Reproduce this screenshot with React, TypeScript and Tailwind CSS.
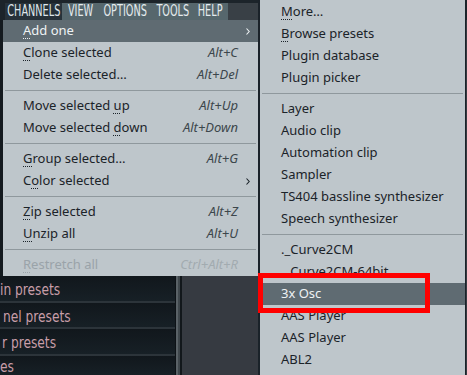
import { ReactNode } from 'react';

type MenuItem =
  | { kind: 'sep' }
  | { kind: 'item'; label: ReactNode; shortcut?: string; arrow?: boolean; active?: boolean; disabled?: boolean };

function U({ children }: { children: ReactNode }) {
  return <span className="underline decoration-dotted decoration-1 underline-offset-[3px]">{children}</span>;
}

const channelMenu: MenuItem[] = [
  { kind: 'item', label: <><U>A</U>dd one</>, arrow: true, active: true },
  { kind: 'item', label: <><U>C</U>lone selected</>, shortcut: 'Alt+C' },
  { kind: 'item', label: 'Delete selected…', shortcut: 'Alt+Del' },
  { kind: 'sep' },
  { kind: 'item', label: <>Move selected <U>u</U>p</>, shortcut: 'Alt+Up' },
  { kind: 'item', label: <>Move selected <U>d</U>own</>, shortcut: 'Alt+Down' },
  { kind: 'sep' },
  { kind: 'item', label: <><U>G</U>roup selected…</>, shortcut: 'Alt+G' },
  { kind: 'item', label: <>C<U>o</U>lor selected</>, arrow: true },
  { kind: 'sep' },
  { kind: 'item', label: <><U>Z</U>ip selected</>, shortcut: 'Alt+Z' },
  { kind: 'item', label: <><U>U</U>nzip all</>, shortcut: 'Alt+U' },
  { kind: 'sep' },
  { kind: 'item', label: <><U>R</U>estretch all</>, shortcut: 'Ctrl+Alt+R', disabled: true },
];

const addMenu: MenuItem[] = [
  { kind: 'item', label: <><U>M</U>ore…</> },
  { kind: 'item', label: <><U>B</U>rowse presets</> },
  { kind: 'item', label: 'Plugin database' },
  { kind: 'item', label: 'Plugin picker' },
  { kind: 'sep' },
  { kind: 'item', label: 'Layer' },
  { kind: 'item', label: 'Audio clip' },
  { kind: 'item', label: 'Automation clip' },
  { kind: 'item', label: 'Sampler' },
  { kind: 'item', label: 'TS404 bassline synthesizer' },
  { kind: 'item', label: 'Speech synthesizer' },
  { kind: 'sep' },
  { kind: 'item', label: '._Curve2CM' },
  { kind: 'item', label: '._Curve2CM-64bit' },
  { kind: 'item', label: '3x Osc', active: true },
  { kind: 'item', label: 'AAS Player' },
  { kind: 'item', label: 'AAS Player' },
  { kind: 'item', label: 'ABL2' },
];

function Chevron() {
  return (
    <svg width="4" height="7" viewBox="0 0 4 7" className="absolute right-[8px] top-[8px]">
      <path d="M0.5 0.5 L3.2 3.5 L0.5 6.5" fill="none" stroke="currentColor" strokeWidth="1.1" />
    </svg>
  );
}

function MenuRows({ items, padL, padR }: { items: MenuItem[]; padL: string; padR: string }) {
  return (
    <>
      {items.map((it, i) => {
        if (it.kind === 'sep') {
          return (
            <div key={i} className="flex h-[9px] items-center px-[2px]">
              <div className="h-px w-full bg-[#8f989d]" />
            </div>
          );
        }
        const color = it.active ? 'bg-[#5f6b72] text-[#eef2f4]' : it.disabled ? 'text-[#9aa3a9]' : 'text-[#1b2329]';
        return (
          <div key={i} className={`relative flex h-[22px] items-center justify-between ${padL} ${padR} ${color}`}>
            <span className="whitespace-nowrap">{it.label}</span>
            {it.shortcut && (
              <span className={`italic whitespace-nowrap ${it.disabled ? 'text-[#a2abb0]' : 'text-[#3c464c]'}`}>{it.shortcut}</span>
            )}
            {it.arrow && <Chevron />}
          </div>
        );
      })}
    </>
  );
}

const topMenus = [
  { label: 'View', w: 'w-[37px]' },
  { label: 'Options', w: 'w-[52px]' },
  { label: 'Tools', w: 'w-[43px]' },
  { label: 'Help', w: 'w-[32px]' },
];

const browserRows = [
  { text: 'in presets', h: 'h-[27px] border-b-2', pad: 'pl-0' },
  { text: 'nel presets', h: 'h-[26px] border-b-2', pad: 'pl-[3px]' },
  { text: 'r presets', h: 'h-[27px] border-b-2', pad: 'pl-[2px]' },
  { text: 'es', h: 'h-[19px]', pad: 'pl-0' },
];

export default function App() {
  const condensed = { fontFamily: '"DejaVu Sans Condensed", "DejaVu Sans", sans-serif' };
  return (
    <div
      className="relative h-[375px] w-[467px] overflow-hidden bg-[#1a2127] text-[13px]"
      style={{ fontFamily: '"Noto Sans", "Open Sans", sans-serif' }}
    >
      {/* app background */}
      <div className="h-[3px] bg-[#1c242a]" />
      <div className="flex h-[17px] items-stretch bg-[#1c242a] text-[15px] uppercase leading-[17px]" style={condensed}>
        <div className="w-[5px]" />
        <div className="flex w-[57px] items-center justify-center bg-[#27323a] text-[#dfe6ea]">
          <span className="inline-block scale-x-[0.72] whitespace-nowrap">Channels</span>
        </div>
        <div className="flex w-[166px] items-center bg-[#56676d] text-[#e4ebee]">
          {topMenus.map((m) => (
            <div key={m.label} className={`flex ${m.w} justify-center`}>
              <span className="inline-block scale-x-[0.72] whitespace-nowrap">{m.label}</span>
            </div>
          ))}
        </div>
        <div className="w-[30px] bg-[#394046]" />
      </div>

      <div className="flex h-[355px]">
        <div className="flex w-[175px] flex-col bg-[#141a1f]">
          <div className="h-[256px] shrink-0" />
          {browserRows.map((r) => (
            <div
              key={r.text}
              className={`${r.h} flex shrink-0 items-center overflow-hidden border-[#2c343a] bg-gradient-to-b from-[#11171c] to-[#172026] pt-[3px] ${r.pad} text-[16px] text-[#c99ea9]`}
              style={condensed}
            >
              <span className="inline-block origin-left scale-x-[0.85] whitespace-nowrap">{r.text}</span>
            </div>
          ))}
        </div>
        <div className="w-[1px] bg-[#0d1216]" />
        <div className="w-[6px] border-l-2 border-[#5a6267] border-r-2 border-r-[#12171b] bg-[#3f474c]" />
        <div className="flex-1 bg-[#363a41]" />
      </div>

      {/* CHANNELS dropdown */}
      <div className="absolute left-[3px] top-[20px] w-[255px] bg-[#bec6cb]">
        <MenuRows items={channelMenu} padL="pl-[20px]" padR="pr-[20px]" />
      </div>

      {/* Add one submenu */}
      <div className="absolute left-[258px] top-0 h-[375px] w-[208px] border-l-2 border-r border-[#1a2229] bg-[#bec6cb] pt-[1px]">
        <MenuRows items={addMenu} padL="pl-[21px]" padR="pr-[10px]" />
      </div>

      {/* annotation */}
      <div className="absolute left-[258px] top-[273px] h-[40px] w-[172px] border-[5px] border-[#ff0000]" />
    </div>
  );
}
